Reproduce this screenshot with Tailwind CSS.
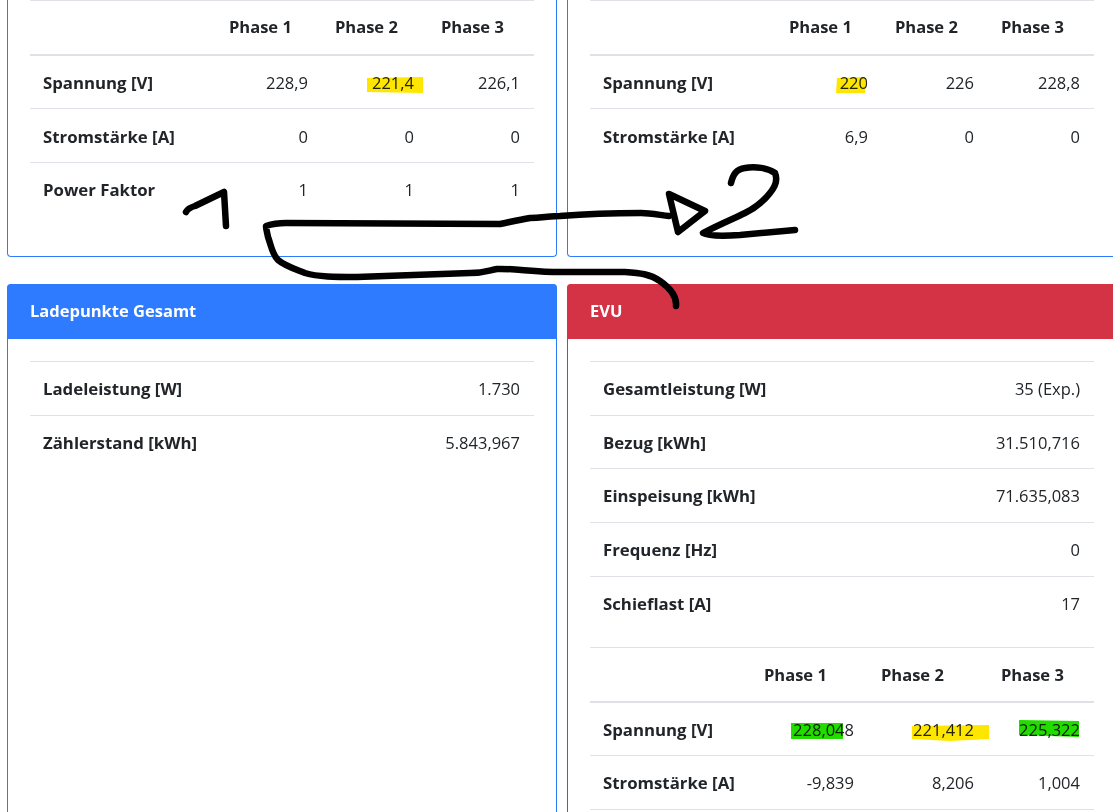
<!DOCTYPE html>
<html lang="de">
<head>
    <meta charset="UTF-8">
    <meta name="viewport" content="width=device-width, initial-scale=1.0">
    <title>Status</title>
    <script src="https://cdn.jsdelivr.net/npm/@tailwindcss/browser@4"></script>
</head>
<body class="bg-white font-['Open_Sans',sans-serif] text-[16.5px] leading-6 text-[#212529] overflow-hidden">
<div class="relative w-[1113px] h-[812px] overflow-hidden">
    <div class="grid grid-cols-[550px_550px] gap-x-[10px] gap-y-[27px] pl-[7px]">

        <!-- Top left -->
        <div class="border border-t-0 border-[#2f7bff] rounded-b px-[22px] pb-[24px]">
            <table class="table-fixed w-[504px] mb-4">
                <colgroup><col class="w-[186px]"><col class="w-[106px]"><col class="w-[106px]"><col class="w-[106px]"></colgroup>
                <thead>
                    <tr class="border-t border-b-2 border-[#dee2e6]">
                        <th></th>
                        <th class="px-[13px] pt-[14px] pb-[15px] text-left font-bold">Phase 1</th>
                        <th class="px-[13px] pt-[14px] pb-[15px] text-left font-bold">Phase 2</th>
                        <th class="px-[13px] pt-[14px] pb-[15px] text-left font-bold">Phase 3</th>
                    </tr>
                </thead>
                <tbody>
                    <tr>
                        <th class="px-[13px] pt-[15px] pb-[13px] text-left font-bold text-[16.8px]">Spannung [V]</th>
                        <td class="pl-[13px] pr-[14px] pt-[15px] pb-[13px] text-right">228,9</td>
                        <td class="pl-[13px] pr-[14px] pt-[15px] pb-[13px] text-right">221,4</td>
                        <td class="pl-[13px] pr-[14px] pt-[15px] pb-[13px] text-right">226,1</td>
                    </tr>
                    <tr class="border-t border-[#dee2e6]">
                        <th class="px-[13px] pt-[16px] pb-[12.8px] text-left font-bold text-[16.8px]">Stromstärke [A]</th>
                        <td class="pl-[13px] pr-[14px] pt-[16px] pb-[12.8px] text-right">0</td>
                        <td class="pl-[13px] pr-[14px] pt-[16px] pb-[12.8px] text-right">0</td>
                        <td class="pl-[13px] pr-[14px] pt-[16px] pb-[12.8px] text-right">0</td>
                    </tr>
                    <tr class="border-t border-[#dee2e6]">
                        <th class="px-[13px] pt-[15.4px] pb-[13.4px] text-left font-bold text-[16.8px]">Power Faktor</th>
                        <td class="pl-[13px] pr-[14px] pt-[15.4px] pb-[13.4px] text-right">1</td>
                        <td class="pl-[13px] pr-[14px] pt-[15.4px] pb-[13.4px] text-right">1</td>
                        <td class="pl-[13px] pr-[14px] pt-[15.4px] pb-[13.4px] text-right">1</td>
                    </tr>
                </tbody>
            </table>
        </div>

        <!-- Top right -->
        <div class="border border-t-0 border-[#2f7bff] rounded-b px-[22px] pb-[24px]">
            <table class="table-fixed w-[504px] mb-4">
                <colgroup><col class="w-[186px]"><col class="w-[106px]"><col class="w-[106px]"><col class="w-[106px]"></colgroup>
                <thead>
                    <tr class="border-t border-b-2 border-[#dee2e6]">
                        <th></th>
                        <th class="px-[13px] pt-[14px] pb-[15px] text-left font-bold">Phase 1</th>
                        <th class="px-[13px] pt-[14px] pb-[15px] text-left font-bold">Phase 2</th>
                        <th class="px-[13px] pt-[14px] pb-[15px] text-left font-bold">Phase 3</th>
                    </tr>
                </thead>
                <tbody>
                    <tr>
                        <th class="px-[13px] pt-[15px] pb-[13px] text-left font-bold text-[16.8px]">Spannung [V]</th>
                        <td class="pl-[13px] pr-[14px] pt-[15px] pb-[13px] text-right">220</td>
                        <td class="pl-[13px] pr-[14px] pt-[15px] pb-[13px] text-right">226</td>
                        <td class="pl-[13px] pr-[14px] pt-[15px] pb-[13px] text-right">228,8</td>
                    </tr>
                    <tr class="border-t border-[#dee2e6]">
                        <th class="px-[13px] pt-[16px] pb-[12.8px] text-left font-bold text-[16.8px]">Stromstärke [A]</th>
                        <td class="pl-[13px] pr-[14px] pt-[16px] pb-[12.8px] text-right">6,9</td>
                        <td class="pl-[13px] pr-[14px] pt-[16px] pb-[12.8px] text-right">0</td>
                        <td class="pl-[13px] pr-[14px] pt-[16px] pb-[12.8px] text-right">0</td>
                    </tr>
                </tbody>
            </table>
        </div>

        <!-- Ladepunkte Gesamt -->
        <div class="border border-[#2f7bff] rounded">
            <div class="bg-[#2f7bff] text-white font-bold px-[23px] pt-[15px] pb-[16px] -m-px mb-0 rounded-t">Ladepunkte Gesamt</div>
            <div class="p-[22px]">
                <table class="table-fixed w-[504px]">
                    <tbody>
                        <tr class="border-t border-[#dee2e6]">
                            <th class="px-[13px] pt-[15px] pb-[14px] text-left font-bold text-[16.8px]">Ladeleistung [W]</th>
                            <td class="pl-[13px] pr-[14px] pt-[15px] pb-[14px] text-right">1.730</td>
                        </tr>
                        <tr class="border-t border-[#dee2e6]">
                            <th class="px-[13px] pt-[15px] pb-[14px] text-left font-bold text-[16.8px]">Zählerstand [kWh]</th>
                            <td class="pl-[13px] pr-[14px] pt-[15px] pb-[14px] text-right">5.843,967</td>
                        </tr>
                    </tbody>
                </table>
            </div>
        </div>

        <!-- EVU -->
        <div class="border border-[#d33344] rounded">
            <div class="bg-[#d33344] text-white font-bold px-[23px] pt-[15px] pb-[16px] -m-px mb-0 rounded-t">EVU</div>
            <div class="p-[22px]">
                <table class="table-fixed w-[504px] mb-[17px]">
                    <tbody>
                        <tr class="border-t border-[#dee2e6]">
                            <th class="px-[13px] pt-[15px] pb-[14px] text-left font-bold text-[16.8px]">Gesamtleistung [W]</th>
                            <td class="pl-[13px] pr-[14px] pt-[15px] pb-[14px] text-right">35 (Exp.)</td>
                        </tr>
                        <tr class="border-t border-[#dee2e6]">
                            <th class="px-[13px] pt-[15px] pb-[13.8px] text-left font-bold text-[16.8px]">Bezug [kWh]</th>
                            <td class="pl-[13px] pr-[14px] pt-[15px] pb-[13.8px] text-right">31.510,716</td>
                        </tr>
                        <tr class="border-t border-[#dee2e6]">
                            <th class="px-[13px] pt-[15px] pb-[13.8px] text-left font-bold text-[16.8px]">Einspeisung [kWh]</th>
                            <td class="pl-[13px] pr-[14px] pt-[15px] pb-[13.8px] text-right">71.635,083</td>
                        </tr>
                        <tr class="border-t border-[#dee2e6]">
                            <th class="px-[13px] pt-[15px] pb-[13.8px] text-left font-bold text-[16.8px]">Frequenz [Hz]</th>
                            <td class="pl-[13px] pr-[14px] pt-[15px] pb-[13.8px] text-right">0</td>
                        </tr>
                        <tr class="border-t border-[#dee2e6]">
                            <th class="px-[13px] pt-[15px] pb-[13.8px] text-left font-bold text-[16.8px]">Schieflast [A]</th>
                            <td class="pl-[13px] pr-[14px] pt-[15px] pb-[13.8px] text-right">17</td>
                        </tr>
                    </tbody>
                </table>
                <table class="table-fixed w-[504px]">
                    <colgroup><col class="w-[161px]"><col class="w-[117px]"><col class="w-[120px]"><col class="w-[106px]"></colgroup>
                    <thead>
                        <tr class="border-t border-b-2 border-[#dee2e6]">
                            <th></th>
                            <th class="px-[13px] pt-[15px] pb-[14px] text-left font-bold">Phase 1</th>
                            <th class="px-[13px] pt-[15px] pb-[14px] text-left font-bold">Phase 2</th>
                            <th class="px-[13px] pt-[15px] pb-[14px] text-left font-bold">Phase 3</th>
                        </tr>
                    </thead>
                    <tbody>
                        <tr>
                            <th class="px-[13px] pt-[15px] pb-[13px] text-left font-bold text-[16.8px]">Spannung [V]</th>
                            <td class="pl-[13px] pr-[14px] pt-[15px] pb-[13px] text-right">228,048</td>
                            <td class="pl-[13px] pr-[14px] pt-[15px] pb-[13px] text-right">221,412</td>
                            <td class="pl-[13px] pr-[14px] pt-[15px] pb-[13px] text-right">225,322</td>
                        </tr>
                        <tr class="border-y border-[#dee2e6]">
                            <th class="px-[13px] pt-[15.4px] pb-[13.4px] text-left font-bold whitespace-nowrap text-[16.8px]">Stromstärke [A]</th>
                            <td class="pl-[13px] pr-[14px] pt-[15.4px] pb-[13.4px] text-right">-9,839</td>
                            <td class="pl-[13px] pr-[14px] pt-[15.4px] pb-[13.4px] text-right">8,206</td>
                            <td class="pl-[13px] pr-[14px] pt-[15.4px] pb-[13.4px] text-right">1,004</td>
                        </tr>
                    </tbody>
                </table>
            </div>
        </div>
    </div>

    <!-- highlighter marks, drawn on the screenshot -->
    <svg class="absolute inset-0 mix-blend-multiply pointer-events-none" width="1113" height="812" viewBox="0 0 1113 812">
        <path fill="#ffe600" d="M367 78 L423 77 L423 93 L367 92 Z"/>
        <path fill="#ffe600" d="M837 78 L865 77 L865 93 L836 93 Z"/>
        <path fill="#ffe600" d="M912 726 L989 725 L989 739 L950 741 L912 739 Z"/>
        <path fill="#22dc00" d="M791 723 L843 723 L843 739 L791 739 Z"/>
        <path fill="#22dc00" d="M1019 720 L1079 721 L1079 737 L1019 735 Z"/>
    </svg>

    <!-- pen strokes -->
    <svg class="absolute inset-0 pointer-events-none" width="1113" height="812" viewBox="0 0 1113 812" fill="none" stroke="#000" stroke-width="6.5" stroke-linecap="round" stroke-linejoin="round">
        <path d="M186 212 Q188 208 195 206 L224 192 L226 226"/>
        <path d="M676 306 C677 296 670 288 660 281 C650 274 640 273 625 272 C600 272 575 272 560 272 C535 272 510 268 497 269 C490 270 485 273 470 273 L357 277 C335 277 318 277 305 273 C295 269 285 266 278 260 C272 254 271 245 268 237 C267 232 266 229 266 226 C272 224 278 223 286 223 L500 224 C510 222 518 220 530 218 C545 217 555 216 560 216 C585 214 615 213 641 213 C650 213 660 215 669 216"/>
        <path d="M669 194 L705 211 L678 232 Z"/>
        <path d="M731 183 C733 175 736 169 745 168 C755 166 768 168 775 173 C778 180 775 187 770 193 C763 202 755 208 745 213 C735 218 720 224 703 233 C708 236 725 236 740 235 L795 230"/>
    </svg>
</div>
</body>
</html>
